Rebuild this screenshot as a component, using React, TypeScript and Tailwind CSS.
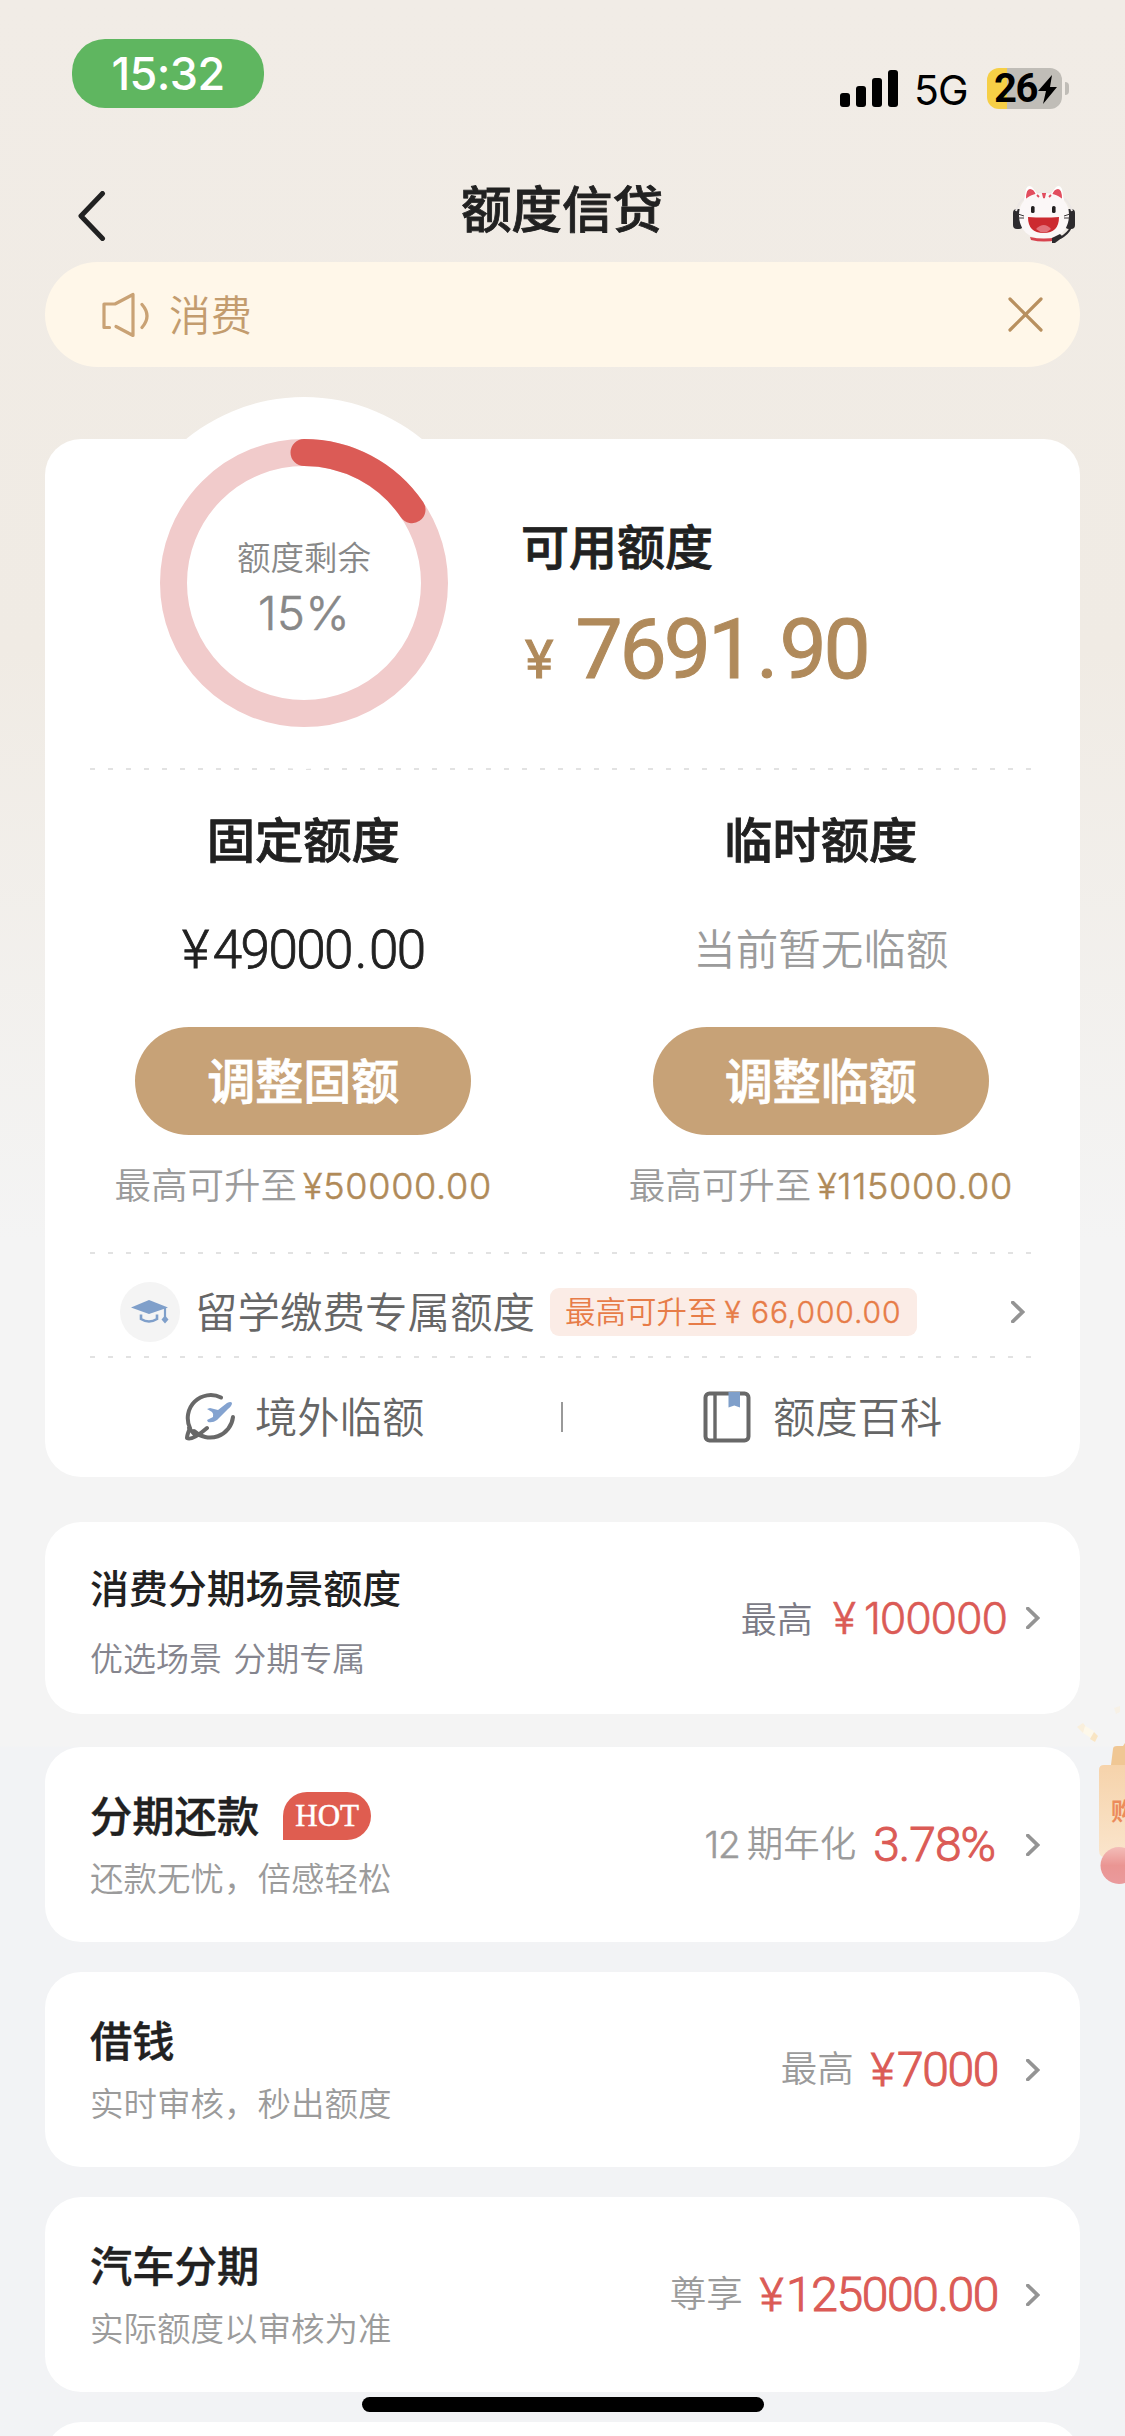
import type { ReactNode } from "react";

type Product = {
  title: string;
  desc: string;
  label: ReactNode;
  value: ReactNode;
  hot?: boolean;
};

const products: Product[] = [
  {
    title: "分期还款",
    desc: "还款无忧，倍感轻松",
    label: (
      <>
        <span className="mt-[5px] mr-[7px] font-[Inter] text-[37px] font-light tracking-[-1px] [-webkit-text-stroke:0.5px_#9b9b9b]">12</span>
        期年化
      </>
    ),
    value: <span className="mr-[3px] tracking-[-1px]">3.78%</span>,
    hot: true,
  },
  {
    title: "借钱",
    desc: "实时审核，秒出额度",
    label: "最高",
    value: <Money value="7000" />,
  },
  {
    title: "汽车分期",
    desc: "实际额度以审核为准",
    label: "尊享",
    value: <Money value="125000.00" />,
  },
];

function Money({ value }: { value: string }) {
  return (
    <>
      <span className="mr-[4px] text-[46px]">¥</span>
      {value}
    </>
  );
}

function Chevron() {
  return (
    <svg className="h-[22px] w-[14px] shrink-0" viewBox="0 0 14 22" fill="none" stroke="#949494" strokeWidth="3.8">
      <path d="M1.8 1.5 11.5 11 1.8 20.5" strokeLinecap="round" strokeLinejoin="miter" />
    </svg>
  );
}

function Dashes() {
  return (
    <div className="mx-[45px] h-[2px] bg-[repeating-linear-gradient(90deg,#e2e2e2_0_5px,transparent_5px_18px)]" />
  );
}

function StatusBar() {
  return (
    <div className="flex h-[147px] items-start justify-between pl-[72px] pr-[56px]">
      <div className="mt-[39px] flex h-[69px] w-[192px] items-center justify-center rounded-[33px] bg-[#5fb660] font-[Inter] text-[45px] font-medium tracking-[-0.6px] text-white">
        15:32
      </div>
      <div className="mt-[68px] flex h-[41px] items-center">
        <div className="flex h-[37px] items-end gap-[6px]">
          <div className="h-[14px] w-[10px] rounded-[3px] bg-black" />
          <div className="h-[21px] w-[10px] rounded-[3px] bg-black" />
          <div className="h-[29px] w-[10px] rounded-[3px] bg-black" />
          <div className="h-[37px] w-[10px] rounded-[3px] bg-black" />
        </div>
        <span className="mt-[3px] ml-[16px] w-[73px] font-[Inter] text-[41px] leading-none tracking-[-1px]">5G</span>
        <div className="flex h-[41px] w-[75px] items-center rounded-[12px] bg-[linear-gradient(90deg,#f6cf46_20px,#c0bdb7_20px)] pl-[7px]">
          <span className="w-[44px] font-[Roboto] text-[40px] leading-none font-bold tracking-[-1.5px]">26</span>
          <svg className="mt-[2px] h-[29px] w-[19px]" viewBox="0 0 19 29">
            <path d="M14 0 0 16h8L5 29 19 12h-7z" />
          </svg>
        </div>
        <div className="ml-[3px] h-[13px] w-[4px] rounded-r-full bg-[#c0bdb7]" />
      </div>
    </div>
  );
}

function CatIcon() {
  return (
    <svg className="h-[58px] w-[64px]" viewBox="0 0 64 58">
      <rect x="1" y="24" width="10" height="20" rx="4" fill="#2d2b2e" />
      <rect x="53" y="24" width="10" height="20" rx="4" fill="#2d2b2e" />
      <path d="M4 26C8 12 18 8 32 8s24 4 28 18" fill="none" stroke="#ece7e5" strokeWidth="2" />
      <path d="M12 16 14 4q2-5 6-2l7 9M52 16 50 4q-2-5-6-2l-7 9" fill="#fff" />
      <path d="M14 14q0-10 4-10t6 6zM50 14q0-10-4-10t-6 6z" fill="#e24d5e" />
      <path d="M32 8c15 0 25 8 25 22 0 15-10 24-25 24S7 45 7 30C7 16 17 8 32 8z" fill="#fbf7f7" />
      <path d="M31 9h2l-1 4zM25 10l2 2M39 10l-2 2" fill="#e24d5e" stroke="#e24d5e" strokeWidth="1.8" />
      <rect x="19" y="21" width="3.6" height="7" rx="1.6" fill="#221f20" />
      <rect x="40" y="21" width="3.6" height="7" rx="1.6" fill="#221f20" />
      <path d="M16 32q16 1 31 0 0 16-15.500 16T16 32z" fill="#cc2a30" />
      <path d="M24 44q8-8 15 0-7 7-15 0z" fill="#e2727b" />
      <path d="M18 52q14 3 27 0v3q-13 3-26 0z" fill="#d8444f" />
      <path d="M6 29l6 2M6 33h6M58 29l-6 2M58 33h-6" stroke="#3a3536" strokeWidth="1" />
      <path d="M59 42q-3 7-11 11" fill="none" stroke="#2d2b2e" strokeWidth="2" />
      <path d="m40 53 8-4 3 3-8 6h-3z" fill="#2d2b2e" />
    </svg>
  );
}

function Header() {
  return (
    <div className="flex h-[115px] items-start justify-between pl-[78px] pr-[49px]">
      <svg className="mt-[44px] h-[50px] w-[64px]" viewBox="0 0 64 50" fill="none">
        <path d="M24.500 2.500 3 25l21.500 22.500" stroke="#212121" strokeWidth="5" strokeLinecap="round" strokeLinejoin="round" />
      </svg>
      <h1 className="mt-[29px] mr-[30px] text-[50.500px] leading-[60px] font-medium text-[#212121] [-webkit-text-stroke:0.8px_#212121]">额度信贷</h1>
      <div className="mt-[38px]">
        <CatIcon />
      </div>
    </div>
  );
}

function Notice() {
  return (
    <div className="mx-[45px] flex h-[105px] items-center rounded-full bg-[#fff7e9] pl-[56px] pr-[37px] text-[#c39c6e]">
      <svg className="h-[46px] w-[48px]" viewBox="0 0 48 46" fill="none" stroke="#c9a275" strokeWidth="3.200" strokeLinecap="round" strokeLinejoin="round">
        <path d="M8.500 35.500H3V12h11L32 2.500v41L15 34.500" />
        <path d="M41 12.500q10 11.500 0 23" />
      </svg>
      <span className="mb-[4px] ml-[20px] flex-1 text-[41.500px] leading-[60px] font-[350]">消费</span>
      <svg className="h-[35px] w-[35px]" viewBox="0 0 35 35" stroke="#b8905f" strokeWidth="3.200" strokeLinecap="round">
        <path d="m2 2 31 31M33 2 2 33" />
      </svg>
    </div>
  );
}

function Ring() {
  return (
    <div className="relative h-[288px] w-[288px]">
      <svg className="absolute inset-0" viewBox="0 0 288 288" fill="none" strokeWidth="27">
        <circle cx="144" cy="144" r="130.500" stroke="#f1cbcb" />
        <path d="M144 13.500A130.500 130.500 0 0 1 252 70.700" stroke="#db5b56" strokeLinecap="round" />
      </svg>
      <div className="relative flex flex-col items-center pt-[97px] text-[#888]">
        <div className="text-[33.500px] leading-[40px] font-[350]">额度剩余</div>
        <div className="mt-[13px] font-[Inter] text-[47px] leading-[48px] font-light tracking-[0.500px] [-webkit-text-stroke:0.6px_#888]">15%</div>
      </div>
    </div>
  );
}

function LimitColumn({ title, amount, action, max }: { title: string; amount: ReactNode; action: string; max: string }) {
  return (
    <div className="flex w-1/2 flex-col items-center pr-[1px]">
      <h2 className="mt-[37px] text-[48.300px] leading-[60px] font-medium text-[#212121] [-webkit-text-stroke:0.8px_#212121]">{title}</h2>
      <div className="mt-[53px] flex h-[60px] items-center">{amount}</div>
      <button className="mt-[47px] h-[108px] w-[336px] rounded-full bg-[#c7a277] pb-[6px] text-[48px] font-medium text-white [-webkit-text-stroke:0.8px_white]">
        {action}
      </button>
      <div className="mt-[26px] flex h-[46px] items-center text-[36.500px] font-[350] text-[#9b9b9b]">
        最高可升至
        <span className="mt-[4px] ml-[6px] font-[Inter] text-[36px] font-light tracking-[0.700px] text-[#b08a58] [-webkit-text-stroke:0.5px_#b08a58]">¥{max}</span>
      </div>
    </div>
  );
}

function CreditCard() {
  return (
    <div className="relative mx-[45px] mt-[72px] h-[1038px] rounded-[36px] bg-white">
      {/* white halo that rises above the card edge */}
      <div className="absolute top-[-42px] left-[73px] h-[372px] w-[372px] rounded-full bg-white" />
      <div className="relative flex h-[329px] items-start pl-[115px]">
        <Ring />
        <div className="ml-[73px] pt-[75px]">
          <h2 className="text-[48px] leading-[60px] font-medium text-[#212121] [-webkit-text-stroke:0.8px_#212121]">可用额度</h2>
          <div className="mt-[34px] flex items-baseline pl-[4px] font-[Roboto] text-[#b08a5b] [-webkit-text-stroke:1px_#b08a5b]">
            <span className="text-[54px] leading-none">¥</span>
            <span className="ml-[22px] text-[84px] leading-[84px] tracking-[-3px]">
              7691<span className="mx-[4px]">.</span>90
            </span>
          </div>
        </div>
      </div>
      <Dashes />
      <div className="flex h-[482px]">
        <LimitColumn
          title="固定额度"
          amount={
            <span className="mt-[2px] font-[Roboto] text-[53px] font-light tracking-[-1.600px] text-[#212121] [-webkit-text-stroke:0.8px_#212121]">
              <span className="mr-[5px]">¥</span>49000<span className="mx-[3px]">.</span>00
            </span>
          }
          action="调整固额"
          max="50000.00"
        />
        <LimitColumn
          title="临时额度"
          amount={<span className="mb-[7px] text-[42.500px] font-[350] text-[#9b9b9b]">当前暂无临额</span>}
          action="调整临额"
          max="115000.00"
        />
      </div>
      <Dashes />
      <div className="flex h-[102px] items-center pt-[14px] pr-[55px] pl-[75px]">
        <div className="flex h-[60px] w-[60px] shrink-0 items-center justify-center rounded-full bg-[#f4f4f4]">
          <svg className="h-[24px] w-[38px]" viewBox="0 0 38 24" fill="#7f9fca">
            <path d="M0 7.500 18 0l19 7.500L18 14z" />
            <path d="M10 14.500v4.500q8 5 16 0v-4.500" fill="none" stroke="#7f9fca" strokeWidth="2.600" />
            <path d="M34 8v10" stroke="#7f9fca" strokeWidth="2.200" />
            <path d="m34 15.500 3.500 4-3.500 4-3.500-4z" />
          </svg>
        </div>
        <span className="mb-[5px] ml-[15px] text-[42.500px] leading-[60px] font-[350] whitespace-nowrap text-[#666]">留学缴费专属额度</span>
        <span className="ml-[15px] flex h-[48px] w-[367px] shrink-0 items-center rounded-[9px] bg-[#fbece6] pl-[15px] text-[30.500px] font-[350] whitespace-nowrap text-[#e77c48]">
          <span className="mb-[2px]">最高可升至</span>
          <span className="ml-[7px] font-[Inter] text-[30px] font-light tracking-[0.900px] [-webkit-text-stroke:0.4px_#e77c48]">¥ 66,000.00</span>
        </span>
        <div className="ml-auto">
          <Chevron />
        </div>
      </div>
      <Dashes />
      <div className="flex h-[118px] items-center text-[42.300px] font-[350] text-[#666]">
        <div className="flex flex-1 items-center pl-[139px]">
          <svg className="h-[52px] w-[52px]" viewBox="0 0 52 52" fill="none" stroke="#686868" strokeWidth="4" strokeLinecap="round" strokeLinejoin="round">
            <path d="M37 6.500A23 23 0 0 0 6 37q-3 7-3 10 5 3 20-10" />
            <path d="M10 40A23 23 0 0 0 49 26" />
            <path d="m5 37 6 7" />
            <path
              d="m23 18 3-1 8 2 9-7q4-2 5 0 0 3-4 6L33 29q-4 3-9 2l-1-2 6-3q1-3-1-5z"
              fill="#84a3d0"
              stroke="none"
            />
          </svg>
          <span className="mb-[5px] ml-[19px]">境外临额</span>
        </div>
        <div className="h-[30px] w-[2px] bg-[#999]" />
        <div className="flex flex-1 items-center pl-[140px]">
          <svg className="h-[52px] w-[48px]" viewBox="0 0 48 52" fill="none" stroke="#686868" strokeWidth="4">
            <rect x="2.500" y="2.500" width="43" height="47" rx="4" />
            <path d="M12 2v48" strokeWidth="3.400" />
            <path d="M25.500 1H37v15.500l-5.700-2-5.800 2z" fill="#7f9fca" stroke="none" />
          </svg>
          <span className="mb-[5px] ml-[22px]">额度百科</span>
        </div>
      </div>
    </div>
  );
}

function SceneCard() {
  return (
    <div className="mx-[45px] mt-[45px] flex h-[192px] justify-between rounded-[36px] bg-white pr-[40px] pl-[45px]">
      <div className="pt-[39px]">
        <h3 className="text-[38.900px] leading-[50px] font-medium text-[#212121]">消费分期场景额度</h3>
        <p className="mt-[24px] text-[33px] leading-[44px] font-[350] [word-spacing:4px] text-[#85858e]">优选场景 分期专属</p>
      </div>
      <div className="flex items-center">
        <span className="mb-[3px] text-[36px] font-[350] text-[#7b7b86]">最高</span>
        <span className="ml-[20px] font-[Inter] text-[43px] font-light tracking-[-1.100px] text-[#db5b56] [-webkit-text-stroke:0.6px_#db5b56]">
          <span className="mr-[9px]">¥</span>100000
        </span>
        <div className="ml-[19px]">
          <Chevron />
        </div>
      </div>
    </div>
  );
}

function ProductCard({ title, desc, label, value, hot }: Product) {
  return (
    <div className="mx-[45px] flex h-[195px] justify-between rounded-[36px] bg-white pr-[40px] pl-[45px]">
      <div className="pt-[44px]">
        <div className="flex h-[50px] items-center">
          <h3 className="mb-[5px] text-[42.300px] leading-[50px] font-medium text-[#212121] [-webkit-text-stroke:0.4px_#212121]">{title}</h3>
          {hot && (
            <span className="ml-[24px] flex h-[48px] w-[88px] items-center justify-center rounded-[24px] rounded-bl-none bg-[#df5d50] font-['Liberation_Serif'] text-[31px] text-white [-webkit-text-stroke:0.5px_white]">
              HOT
            </span>
          )}
        </div>
        <p className="mt-[14px] text-[33.500px] leading-[44px] font-[350] text-[#9b9b9b]">{desc}</p>
      </div>
      <div className="flex items-center">
        <span className="mb-[4px] flex items-center text-[36.500px] font-[350] text-[#9b9b9b]">{label}</span>
        <span className="mt-[1px] ml-[17px] font-[Roboto] text-[48px] font-light tracking-[-1.400px] text-[#db5b56] [-webkit-text-stroke:1px_#db5b56]">
          {value}
        </span>
        <div className="ml-[28px]">
          <Chevron />
        </div>
      </div>
    </div>
  );
}

// Promo widget docked half outside the right edge
function PromoWidget() {
  return (
    <div className="absolute top-[1700px] right-0 h-[190px] w-[52px] overflow-hidden">
      <svg className="absolute inset-0" viewBox="0 0 52 190">
        <defs>
          <linearGradient id="box" x1="0" y1="0" x2="0" y2="1">
            <stop offset="0" stopColor="#f6d3ab" />
            <stop offset="1" stopColor="#fae5cc" />
          </linearGradient>
          <linearGradient id="ball" x1="0" y1="0" x2="0" y2="1">
            <stop offset="0" stopColor="#f3bdb8" />
            <stop offset="0.500" stopColor="#ea9593" />
            <stop offset="1" stopColor="#ea9a9c" />
          </linearGradient>
        </defs>
        <path d="m4 27 6-4 4 5-4 5z" fill="#f9efdc" />
        <path d="m12 26 9 5-3 7-8-5z" fill="#fdf8ea" />
        <path d="m17 39 5 3 3-6-4-4z" fill="#f9e5c3" />
        <path d="m41 8 6-2v6l-4 2z" fill="#f7f1e6" />
        <path d="M40 49q0-3 4-3h6l2-3v22H38z" fill="#f0c794" />
        <path d="M26 70q0-5 5-5h21v93H34q-8 0-8-8z" fill="url(#box)" />
        <circle cx="46" cy="165.500" r="18.500" fill="url(#ball)" />
      </svg>
      <span className="absolute top-[97px] left-[38px] text-[24px] leading-[26px] font-bold text-[#ec8b5b]">购</span>
    </div>
  );
}

export default function App() {
  return (
    <div className="relative h-[2436px] w-[1125px] overflow-hidden bg-[linear-gradient(180deg,#f1ece6_0px,#f0ebe4_650px,#f4f4f4_1240px,#f4f4f4_1746px,#f2f3f5_1747px)] font-['Noto_Sans_CJK_SC',sans-serif]">
      <StatusBar />
      <Header />
      <Notice />
      <CreditCard />
      <SceneCard />
      <div className="mt-[33px] flex flex-col gap-[30px]">
        {products.map((item) => (
          <ProductCard key={item.title} {...item} />
        ))}
        <div className="mx-[45px] h-[195px] rounded-[36px] bg-white" />
      </div>
      <PromoWidget />
      <div className="absolute bottom-[24px] left-[362px] h-[15px] w-[402px] rounded-full bg-black" />
    </div>
  );
}
